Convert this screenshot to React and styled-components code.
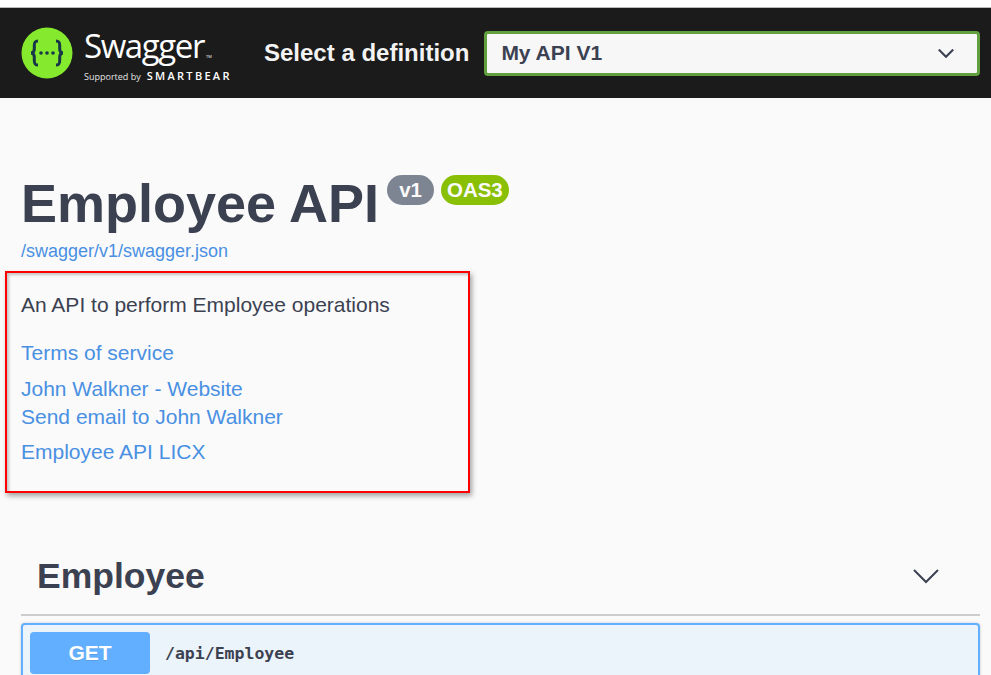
import React from 'react';
import styled, {createGlobalStyle} from 'styled-components';

const Global = createGlobalStyle`
html, body {
    margin: 0;
    height: 675px;
    overflow: hidden;
    background: #fafafa;
    font-family: "Liberation Sans", Arial, sans-serif;
    color: #3b4151;
}
`;

const TopStrip = styled.div`
height: 7px;
background: #fff;
border-bottom: 1px solid #b9b9b9;
box-sizing: content-box;
`;

const Topbar = styled.header`
height: 90px;
background: #1b1b1b;
display: flex;
align-items: center;
padding: 0 11px 0 21px;
`;

const Logo = styled.div`
display: flex;
align-items: center;
gap: 11px;
width: 243px;
flex: none;
`;

const LogoWords = styled.div`
display: flex;
flex-direction: column;
color: #fff;
margin-top: 10px;
`;

const LogoName = styled.div`
font-family: "Open Sans", sans-serif;
font-weight: 400;
font-size: 33px;
line-height: 26px;
letter-spacing: -1.4px;
`;

const LogoTm = styled.span`
font-size: 4px;
letter-spacing: 0;
margin-left: 2px;
`;

const LogoSupport = styled.div`
display: flex;
align-items: baseline;
gap: 6px;
font-family: "Open Sans", sans-serif;
font-size: 9px;
line-height: 12px;
white-space: nowrap;
color: #e4e4e4;
`;

const SmartBear = styled.span`
font-size: 11px;
font-weight: 600;
letter-spacing: 2.300px;
color: #fff;
`;

const SelectLabel = styled.label`
font-size: 24px;
font-weight: 700;
color: #f3f3f3;
white-space: nowrap;
margin-right: 15px;
`;

const SelectBox = styled.div`
flex: 1;
height: 45px;
box-sizing: border-box;
border: 3px solid #62a03f;
border-radius: 4px;
background: #f7f7f7;
display: flex;
align-items: center;
justify-content: space-between;
padding: 0 23px 0 14px;
font-size: 21px;
font-weight: 700;
color: #3b4151;
`;

const Info = styled.section`
padding: 76px 0 0 21px;
`;

const TitleRow = styled.div`
display: flex;
align-items: flex-start;
`;

const Title = styled.h1`
margin: 0 0 2px;
font-size: 54px;
line-height: 58px;
font-weight: 700;
color: #3b4151;
`;

const Badge = styled.span`
height: 30px;
border-radius: 15px;
background: ${props => props.$color};
color: #fafafa;
font-size: 20.500px;
font-weight: 700;
line-height: 30px;
padding: 0 ${props => props.$pad}px;
margin: 1px 0 0 ${props => props.$gap}px;
`;

const SpecLink = styled.a`
display: block;
font-size: 18px;
line-height: 22px;
color: #4990e2;
margin-top: 6px;
`;

const Highlight = styled.div`
box-sizing: border-box;
width: 465px;
height: 222px;
margin: 9px 0 0 -16px;
padding: 20px 0 0 14px;
border: 2px solid #f00;
box-shadow: 2px 3px 5px rgba(0, 0, 0, 0.35), inset 2px 2px 3px rgba(0, 0, 0, 0.22);
`;

const Description = styled.p`
margin: 0 0 22px;
font-size: 21px;
line-height: 24px;
color: #3b4151;
`;

const InfoLink = styled.a`
display: block;
font-size: 21px;
line-height: 28px;
color: #4990e2;
margin-top: ${props => props.$top || 0}px;
`;

const Tag = styled.section`
margin: 59px 11px 0 21px;
`;

const TagHeader = styled.div`
display: flex;
align-items: center;
justify-content: space-between;
height: 48px;
padding: 0 41px 14px 16px;
border-bottom: 2px solid #cdcdcd;
`;

const TagName = styled.h3`
margin: 0;
font-size: 35.500px;
font-weight: 700;
color: #3b4151;
`;

const OpBlock = styled.div`
margin-top: 7px;
display: flex;
align-items: center;
height: 72px;
box-sizing: border-box;
padding: 7px 7px 19px;
background: #ebf3fb;
border: 2px solid #61affe;
border-radius: 4px;
box-shadow: 0 0 3px rgba(0, 0, 0, 0.19);
`;

const Method = styled.span`
width: 120px;
height: 42px;
flex: none;
border-radius: 4px;
background: #61affe;
color: #fff;
font-size: 21px;
font-weight: 700;
line-height: 42px;
text-align: center;
text-shadow: 0 1px 0 rgba(0, 0, 0, 0.1);
`;

const OpPath = styled.span`
margin-left: 15px;
font-family: "DejaVu Sans Mono", monospace;
font-size: 16.500px;
font-weight: 700;
color: #3b4151;
`;

const SwaggerMark = () => (
    <svg width="52" height="52" viewBox="0 0 52 52">
        <circle cx="26" cy="26" r="25.500" fill="#85ea2d" />
        <g fill="none" stroke="#173647" strokeWidth="3">
            <path d="M17 14c-3.500 0-3.700 2-3.700 4.500v3.500c0 2.600-1.100 3.600-3 4 1.900.4 3 1.400 3 4v3.500c0 2.500.2 4.500 3.700 4.500" />
            <path d="M35 14c3.500 0 3.700 2 3.700 4.500v3.500c0 2.600 1.100 3.600 3 4-1.900.4-3 1.400-3 4v3.500c0 2.500-.2 4.500-3.700 4.500" />
        </g>
        <g fill="#173647">
            <circle cx="20" cy="26" r="1.800" />
            <circle cx="26" cy="26" r="1.800" />
            <circle cx="32" cy="26" r="1.800" />
        </g>
    </svg>
);

const Chevron = ({width, height, stroke}) => (
    <svg width={width} height={height} viewBox="0 0 26 15">
        <path d="M1 1l12 12L25 1" fill="none" stroke="currentColor" strokeWidth={stroke} />
    </svg>
);

const App = () => (
    <>
        <Global />
        <TopStrip />
        <Topbar>
            <Logo>
                <SwaggerMark />
                <LogoWords>
                    <LogoName>Swagger<LogoTm>TM</LogoTm></LogoName>
                    <LogoSupport>Supported by <SmartBear>SMARTBEAR</SmartBear></LogoSupport>
                </LogoWords>
            </Logo>
            <SelectLabel>Select a definition</SelectLabel>
            <SelectBox>
                My API V1
                <Chevron width={16} height={9} stroke={3.6} />
            </SelectBox>
        </Topbar>
        <Info>
            <TitleRow>
                <Title>Employee API</Title>
                <Badge $color="#7d8492" $pad={12} $gap={8}>v1</Badge>
                <Badge $color="#89bf04" $pad={6} $gap={7}>OAS3</Badge>
            </TitleRow>
            <SpecLink>/swagger/v1/swagger.json</SpecLink>
            <Highlight>
                <Description>An API to perform Employee operations</Description>
                <InfoLink>Terms of service</InfoLink>
                <InfoLink $top={8}>John Walkner - Website</InfoLink>
                <InfoLink>Send email to John Walkner</InfoLink>
                <InfoLink $top={7}>Employee API LICX</InfoLink>
            </Highlight>
        </Info>
        <Tag>
            <TagHeader>
                <TagName>Employee</TagName>
                <Chevron width={26} height={15} stroke={2} />
            </TagHeader>
            <OpBlock>
                <Method>GET</Method>
                <OpPath>/api/Employee</OpPath>
            </OpBlock>
        </Tag>
    </>
);

export default App;
